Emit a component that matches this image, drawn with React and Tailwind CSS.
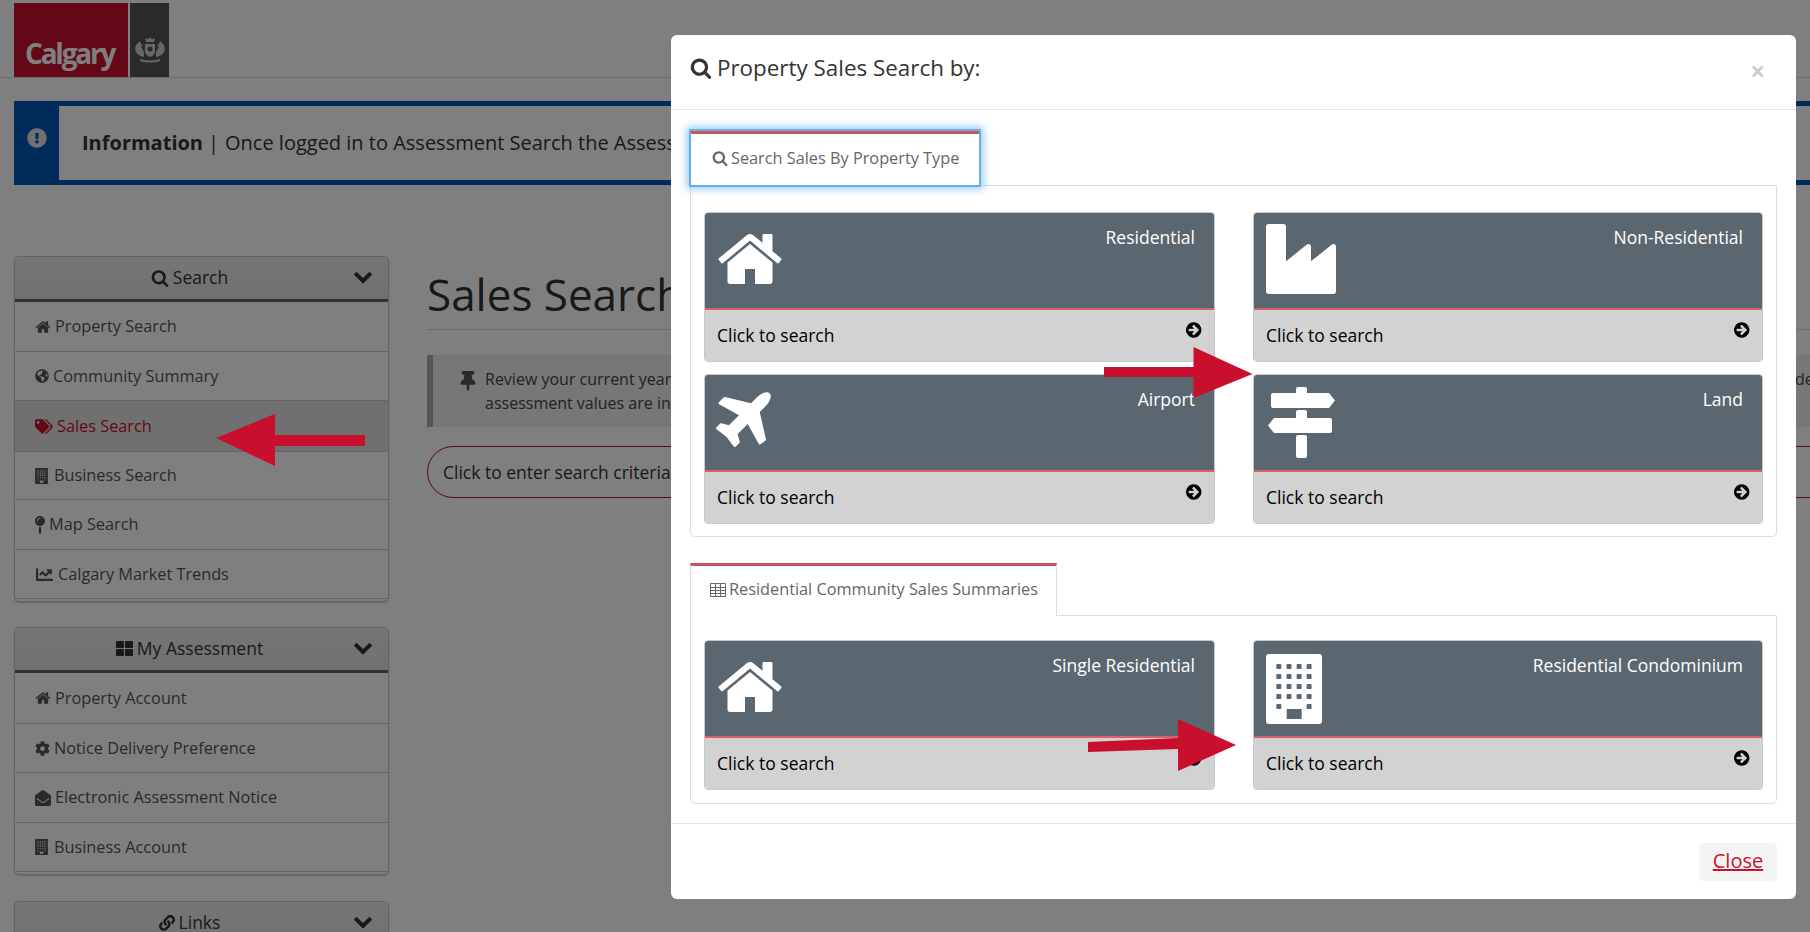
import React from "react";
import {
  FaChartLine,
  FaCog,
  FaEnvelopeOpen,
  FaExclamationCircle,
  FaGlobeAmericas,
  FaLink,
  FaMapPin,
  FaTags,
  FaThLarge,
  FaThumbtack,
} from "react-icons/fa";

const FA = ({ d, className }) => (
  <svg viewBox="0 0 1792 1792" fill="currentColor" className={className}>
    <path d={d} />
  </svg>
);

const homeD =
  "M1472 992v480q0 26-19 45t-45 19h-384v-384h-256v384h-384q-26 0-45-19t-19-45v-480q0-1 .5-3t.5-3l575-474 575 474q1 2 1 6zm223-69l-62 74q-8 9-21 11h-3q-13 0-21-7l-692-577-692 577q-12 8-24 7-13-2-21-11l-62-74q-8-10-7-23.5t11-21.5l719-599q32-26 76-26t76 26l244 204v-195q0-14 9-23t23-9h192q14 0 23 9t9 23v408l219 182q10 8 11 21.5t-7 23.5z";
const searchD =
  "M1216 832q0-185-131.500-316.500t-316.500-131.500-316.500 131.500-131.500 316.500 131.500 316.500 316.500 131.500 316.500-131.500 131.500-316.500zm512 832q0 52-38 90t-90 38q-54 0-90-38l-343-342q-179 124-399 124-143 0-273.500-55.500t-225-150-150-225-55.500-273.500 55.500-273.500 150-225 225-150 273.500-55.500 273.500 55.500 225 150 150 225 55.500 273.500q0 220-124 399l343 343q37 37 37 90z";
const chevronD =
  "M1683 808l-742 741q-19 19-45 19t-45-19l-742-741q-19-19-19-45.500t19-45.500l166-165q19-19 45-19t45 19l531 531 531-531q19-19 45-19t45 19l166 165q19 19 19 45.500t-19 45.500z";
const arrowCircleD =
  "M1285 896q0-27-18-45l-91-91-362-362q-18-18-45-18t-45 18l-91 91q-18 18-18 45t18 45l189 189h-502q-26 0-45 19t-19 45v128q0 26 19 45t45 19h502l-189 189q-19 19-19 45t19 45l91 91q18 18 45 18t45-18l362-362 91-91q18-18 18-45zm251 0q0 209-103 385.500t-279.500 279.500-385.500 103-385.500-103-279.500-279.500-103-385.500 103-385.500 279.500-279.500 385.500-103 385.500 103 279.500 279.500 103 385.500z";
const industryD =
  "M448 0q26 0 45 19t19 45v891l536-429q17-14 40-14 26 0 45 19t19 45v379l536-429q17-14 40-14 26 0 45 19t19 45v1152q0 26-19 45t-45 19h-1664q-26 0-45-19t-19-45v-1664q0-26 19-45t45-19h384z";
const planeD =
  "M1376 160q44 52 12 148t-108 172l-161 161 160 696q5 19-12 33l-128 96q-7 6-19 6-4 0-7-1-15-3-21-16l-279-508-259 259 53 194q5 17-8 31l-96 96q-9 9-23 9h-2q-15-2-24-13l-189-252-252-189q-11-7-13-23-1-13 9-25l96-97q9-9 23-9 6 0 8 1l194 53 259-259-508-279q-14-8-17-24-2-16 9-27l128-128q14-13 30-8l665 159 160-160q76-76 172-108t148 12z";

const HomeBig = () => <FA d={homeD} className="w-[70px] h-[70px] text-white -ml-[1px]" />;
const IndustryBig = () => <FA d={industryD} className="w-[70px] h-[70px] text-white ml-[1px]" />;
const PlaneBig = () => <FA d={planeD} className="w-[70px] h-[70px] text-white mt-[1px]" />;

const SignsBig = () => (
  <svg viewBox="0 0 70 72" fill="#fff" className="w-[70px] h-[72px] mt-[1px] ml-[1px]">
    <path d="M32 0h7q2 0 2 2v4h22l6 7.500-6 7.500H7q-2 0-2-2V8q0-2 2-2h23V2q0-2 2-2z" />
    <path d="M32 23h7q2 0 2 2v6h23q2 0 2 2v11q0 2-2 2H8l-6-7.500 6-7.500h22v-6q0-2 2-2z" />
    <path d="M30 50q0-2 2-2h7q2 0 2 2v19q0 2-2 2h-7q-2 0-2-2z" />
  </svg>
);

// same tower for the big card icon and the small menu icon, only the colours change
const Tower = ({ fg, bg, className }) => {
  const cols = [10.3, 20.5, 30.6, 40.6];
  const rows = [10, 20, 30, 40];
  return (
    <svg viewBox="0 0 56 70" className={className}>
      <rect width="56" height="70" rx="3" fill={fg} />
      {rows.map((y) =>
        cols.map((x) => <rect key={`${x}-${y}`} x={x} y={y} width="5" height="5" rx="1" fill={bg} />)
      )}
      <rect x="10.3" y="50" width="5" height="5" rx="1" fill={bg} />
      <rect x="40.6" y="50" width="5" height="5" rx="1" fill={bg} />
      <rect x="20.7" y="55" width="15" height="10" fill={bg} />
    </svg>
  );
};

const BuildingBig = () => <Tower fg="#fff" bg="#5b6770" className="w-[56px] h-[70px] mt-[2px] ml-[1px]" />;
const BuildingSmall = () => <Tower fg="#555555" bg="#fff" className="w-[13px] h-[16px] mr-[2px]" />;

const TableIcon = () => (
  <svg viewBox="0 0 16 14" fill="none" stroke="currentColor" strokeWidth="1" className="w-[16px] h-[14px]">
    <path d="M.5.500h15v13H.5zM.5 4.500h15M.5 7.500h15M.5 10.500h15M5.500 1v12M10.500 1v12" />
  </svg>
);

const Crest = () => (
  <svg viewBox="0 0 34 28" fill="#d0d0d0" className="w-[34px] h-[28px]">
    <path d="M13 6l-1-4 3 1.500 2-2.500 2 2.500 3-1.500-1 4z" />
    <path d="M12 8h10v7q0 4-5 6-5-2-5-6z" />
    <circle cx="17" cy="13" r="2.500" fill="#54555a" />
    <path d="M11 21q-6-1-8-5-2-5 1-8l3-3 1 3 2 1-2 2 2 3 1 3zM23 21q6-1 8-5 2-5-1-8l-3-3-1 3-2 1 2 2-2 3-1 3z" />
    <path d="M7 23q10 3 20 0v2q-10 3-20 0z" />
  </svg>
);

const NavItem = ({ icon, text, active, h = "h-[49px]" }) => (
  <div
    className={`${h} flex items-center gap-[4px] pl-[20px] border-b border-[#c8c8c8] text-[16.3px] ${
      active ? "bg-[#e0e0e0] text-[#c8102e]" : "text-[#555555]"
    }`}
  >
    {icon}
    <span>{text}</span>
  </div>
);

const SidePanel = ({ icon, title, children, className }) => (
  <div className={`w-[375px] rounded-[5px] border border-[#c4c4c4] shadow-[0_1px_2px_rgba(0,0,0,0.2)] ${className}`}>
    <div className="relative h-[45px] flex items-center justify-center gap-[4px] pr-[24px] pb-[1px] rounded-t-[5px] bg-gradient-to-b from-[#ececec] to-[#e2e2e2] border-b-[3px] border-[#5b6770] text-[17.5px] text-[#333333]">
      {icon}
      <span>{title}</span>
      <FA d={chevronD} className="absolute right-[15px] top-[9px] w-[20px] h-[20px] text-[#333333]" />
    </div>
    <div className="pb-[2px]">{children}</div>
  </div>
);

const Card = ({ icon, title }) => (
  <div className="h-[150px] rounded-[4px] border border-[#c8c8c8] overflow-hidden flex flex-col">
    <div className="h-[97px] shrink-0 bg-[#5b6770] border-b-2 border-[#d95f6e] flex items-start justify-between pl-[11px] pt-[11px] pr-[19px]">
      <div className="shrink-0">{icon}</div>
      <div className="text-white text-[17.5px] leading-[24px] mt-[1px]">{title}</div>
    </div>
    <div className="flex-1 bg-[#d2d2d2] flex items-start justify-between pl-[12px] pr-[10px] text-[17.5px] text-black">
      <span className="mt-[13px] leading-[24px]">Click to search</span>
      <FA d={arrowCircleD} className="mt-[11px] w-[18px] h-[18px] text-black" />
    </div>
  </div>
);

const Arrow = ({ points }) => (
  <svg viewBox="0 0 1810 932" className="absolute inset-0 w-[1810px] h-[932px] pointer-events-none">
    <polygon points={points} fill="#c8102e" />
  </svg>
);

const Sidebar = () => (
  <aside className="w-[375px] shrink-0">
    <SidePanel icon={<FA d={searchD} className="w-[18px] h-[18px]" />} title="Search">
      <NavItem icon={<FA d={homeD} className="w-[16px] h-[16px]" />} text="Property Search" h="h-[50px]" />
      <NavItem icon={<FaGlobeAmericas className="w-[14px] h-[14px]" />} text="Community Summary" />
      <NavItem icon={<FaTags className="w-[18px] h-[15px] text-[#c8102e]" />} text="Sales Search" active h="h-[51px]" />
      <NavItem icon={<BuildingSmall />} text="Business Search" h="h-[48px]" />
      <NavItem icon={<FaMapPin className="w-[10px] h-[20px]" />} text="Map Search" h="h-[50px]" />
      <NavItem icon={<FaChartLine className="w-[19px] h-[17px]" />} text="Calgary Market Trends" />
    </SidePanel>
    <SidePanel icon={<FaThLarge className="w-[17px] h-[17px]" />} title="My Assessment" className="mt-[25px]">
      <NavItem icon={<FA d={homeD} className="w-[16px] h-[16px]" />} text="Property Account" h="h-[51px]" />
      <NavItem icon={<FaCog className="w-[15px] h-[15px]" />} text="Notice Delivery Preference" />
      <NavItem icon={<FaEnvelopeOpen className="w-[16px] h-[16px]" />} text="Electronic Assessment Notice" h="h-[50px]" />
      <NavItem icon={<BuildingSmall />} text="Business Account" />
    </SidePanel>
    <SidePanel icon={<FaLink className="w-[16px] h-[16px]" />} title="Links" className="mt-[26px]">
      <NavItem text="" />
    </SidePanel>
  </aside>
);

const Main = () => (
  <main className="ml-[38px] w-[1500px] shrink-0">
    <h1 className="text-[44px] leading-[60px] text-[#333333] h-[77px] pt-[11px] -mt-[3px] border-b border-[#d8d8d8]">Sales Search</h1>
    <div className="mt-[25px] h-[72px] w-[1500px] bg-[#eeeeee] border-l-[6px] border-[#aaaaaa] flex pl-[25px] pt-[12px] text-[16px] leading-[24px] text-[#444444]">
      <FaThumbtack className="w-[20px] h-[20px] mt-[4px] mr-[7px] shrink-0 text-[#555555]" />
      <p className="whitespace-nowrap">
        <span className="inline-block w-[1310px]">Review your current year property assessment against the recent sales of comparable properties so that you can better understand and</span>
        <span>decide if your</span>
        <br />
        assessment values are in line with the market.
      </p>
    </div>
    <div className="mt-[19px] h-[52px] w-[1500px] rounded-[26px] border border-[#c8102e] flex items-center pl-[15px] text-[17.5px] text-[#333333]">
      Click to enter search criteria
    </div>
  </main>
);

const Modal = () => (
  <div className="ml-[671px] mt-[35px] w-[1125px] h-[864px] rounded-[6px] bg-white flex flex-col">
    <div className="h-[75px] border-b border-[#e5e5e5] flex items-center pl-[19px] pr-[31px] pb-[8px] shrink-0">
      <FA d={searchD} className="w-[22px] h-[22px] text-[#333333]" />
      <span className="ml-[5px] text-[22.4px] text-[#333333]">Property Sales Search by:</span>
      <span className="ml-auto text-[26px] font-bold text-[#cccccc] mt-[6px]">×</span>
    </div>
    <div className="px-[19px] flex-1">
      <div className="mt-[21px] ml-[1px] w-[288px] h-[54px] relative z-10 bg-white border-t-[3px] border-[#c9545a] shadow-[0_0_0_2px_#66afe9,0_0_8px_4px_rgba(102,175,233,0.7)] flex items-center pl-[21px] pb-[3px] gap-[3px] text-[16.3px] text-[#666666]">
        <FA d={searchD} className="w-[16px] h-[16px]" />
        <span>Search Sales By Property Type</span>
      </div>
      <div className="h-[352px] rounded-b-[5px] border border-[#dddddd] px-[13px] pt-[26px]">
        <div className="grid grid-cols-[511px_510px] gap-x-[38px] gap-y-[12px]">
          <Card icon={<HomeBig />} title="Residential" />
          <Card icon={<IndustryBig />} title="Non-Residential" />
          <Card icon={<PlaneBig />} title="Airport" />
          <Card icon={<SignsBig />} title="Land" />
        </div>
      </div>
      <div className="mt-[26px] w-[367px] h-[53px] relative z-10 bg-white border-t-[3px] border-x border-x-[#dddddd] border-t-[#c9545a] flex items-center pl-[19px] pb-[3px] gap-[3px] text-[16.3px] text-[#666666] -mb-[1px]">
        <TableIcon />
        <span>Residential Community Sales Summaries</span>
      </div>
      <div className="h-[189px] rounded-b-[5px] border border-[#dddddd] px-[13px] pt-[24px]">
        <div className="grid grid-cols-[511px_510px] gap-x-[38px]">
          <Card icon={<HomeBig />} title="Single Residential" />
          <Card icon={<BuildingBig />} title="Residential Condominium" />
        </div>
      </div>
    </div>
    <div className="h-[76px] border-t border-[#e5e5e5] flex items-start justify-end pr-[19px] pt-[19px] shrink-0">
      <button className="w-[78px] h-[38px] pb-[2px] rounded-[4px] bg-[#f4f4f4] text-[20px] text-[#c8102e] underline">Close</button>
    </div>
  </div>
);

export default function App() {
  return (
    <div className="relative w-[1810px] h-[932px] overflow-hidden bg-white font-['Open_Sans',sans-serif]">
      <header className="h-[78px] pt-[3px] pl-[14px] border-b border-[#d8d8d8] flex gap-[2px]">
        <div className="w-[114px] h-[74px] bg-[#c8102e] text-white font-bold text-[28px] tracking-[-2.2px] pl-[11px] pt-[32px] leading-[36px]">Calgary</div>
        <div className="w-[39px] h-[74px] bg-[#54555a] pt-[33px] flex justify-center"><Crest /></div>
      </header>
      <div className="mt-[23px] ml-[14px] w-[1900px] h-[84px] bg-[#0058b8] flex py-[5px] pl-[45px] relative">
        <FaExclamationCircle className="absolute left-[13px] top-[27px] w-[20px] h-[20px] text-[#e0e0e0]" />
        <div className="flex-1 bg-white flex items-center pl-[23px] text-[20px] text-[#333333] whitespace-nowrap">
          <b className="font-bold">Information</b>
          <span className="ml-[5px] mr-[6px]">|</span>
          <span>Once logged in to Assessment Search the Assessment Search results are shown here.</span>
        </div>
      </div>
      <div className="mt-[71px] ml-[14px] flex">
        <Sidebar />
        <Main />
      </div>

      <div className="absolute inset-0 bg-black/50">
        <Modal />
      </div>

      <Arrow points="216,438 275,414 275,435 365,435 365,446 275,446 275,466" />
      <Arrow points="1252.5,374 1193.5,398 1193.5,377 1104,377 1104,367 1193.5,367 1193.5,347" />
      <Arrow points="1236,745 1178,771 1178,749 1088,752 1088,742 1178,738 1178,719" />
    </div>
  );
}
